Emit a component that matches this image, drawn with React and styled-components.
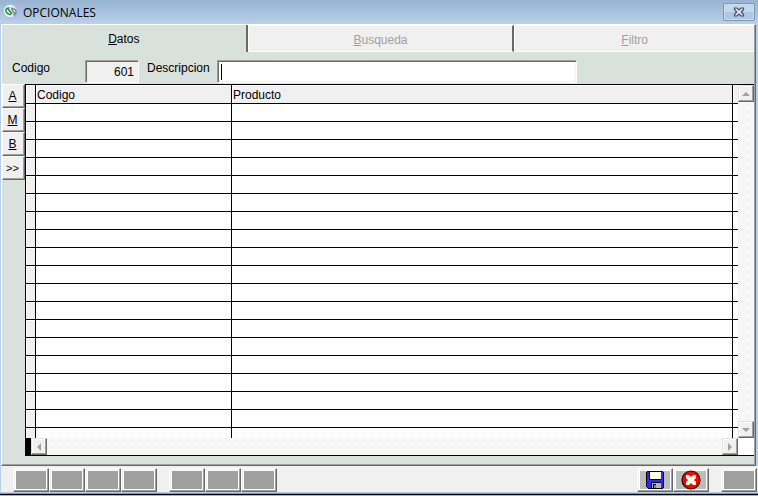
import React from "react";
import styled, { createGlobalStyle } from "styled-components";

const SIDE_ACTIONS = ["A", "M", "B", ">>"];
const ROWS = Array.from({ length: 60 }, (_, i) => i);

const AppIcon = () => (
  <svg width="16" height="16" viewBox="0 0 16 16">
    <circle cx="8" cy="8" r="7.5" fill="#b3bfe6" />
    <circle cx="7" cy="7" r="6.2" fill="#e9eefb" />
    <path d="M6.500 4C4 3.500 2.200 5.500 3 7.500c.8 2 3.200 3.500 5 3" fill="none" stroke="#1f8a3c" strokeWidth="1.500" />
    <path d="M5 5l4 5" fill="none" stroke="#2f8f48" strokeWidth="1.800" />
    <path d="M8 4.500c2-.5 4.500.5 5 2.500.4 2-.5 3.500-2.500 4.500M8.500 5l3 4.500" fill="none" stroke="#7b8c92" strokeWidth="1.500" />
  </svg>
);

const CloseIcon = () => (
  <svg width="12" height="10" viewBox="0 0 12 10">
    <path
      d="M1.500 1h2.500l2 2 2-2h2.500v1.500L8.300 5l2.200 2.500V9H8L6 7 4 9H1.500V7.500L3.700 5 1.500 2.500z"
      fill="#dfe6ee"
      stroke="#46505e"
      strokeWidth="1.200"
    />
  </svg>
);

const DiskIcon = () => (
  <svg width="18" height="18" viewBox="0 0 18 18" shapeRendering="crispEdges">
    <path d="M0 1h1V0h16v1h1v16h-1v1H2v-1H1v-1H0z" fill="#000" />
    <path d="M1 1h16v16H2v-1H1z" fill="#2828ff" />
    <path d="M3 1h12v8H3z" fill="#000" />
    <path d="M4 1h11v7H4z" fill="#ffffe8" />
    <path d="M5 11h10v6H5z" fill="#000" />
    <path d="M6 12h9v5H6z" fill="#b8b8b8" />
    <path d="M7 13h3v4H7z" fill="#000" />
    <path d="M8 14h2v3H8z" fill="#808080" />
  </svg>
);

const CancelIcon = () => (
  <svg width="20" height="20" viewBox="0 0 20 20">
    <circle cx="10" cy="10" r="9" fill="#f00" stroke="#200" strokeWidth="1.200" />
    <path d="M5 7V5h3l2 2 2-2h3v3l-2 2 2 2v3h-3l-2-2-2 2H5v-3l2-2-2-2z" fill="#ffffe8" />
  </svg>
);

const ARROWS = {
  up: "M0 6h8L4 2z",
  down: "M0 2h8L4 6z",
  left: "M6 0v8L2 4z",
  right: "M2 0v8l4-4z",
};

const Arrow = ({ dir }) => (
  <svg width="8" height="8" viewBox="0 0 8 8">
    <path d={ARROWS[dir]} fill="#a0a0a0" />
  </svg>
);

const App = () => (
  <>
    <GlobalStyle />
    <Window>
      <TitleBar>
        <AppIcon />
        <Title>OPCIONALES</Title>
        <CloseButton aria-label="Cerrar">
          <CloseIcon />
        </CloseButton>
      </TitleBar>
      <Page>
        <Tabs role="tablist">
          <Tab role="tab" aria-selected="true">
            <u>D</u>atos
          </Tab>
          <Tab role="tab" aria-selected="false" disabled>
            <u>B</u>usqueda
          </Tab>
          <Tab role="tab" aria-selected="false" disabled>
            <u>F</u>iltro
          </Tab>
        </Tabs>
        <Panel>
          <Fields>
            <CodeLabel htmlFor="codigo">Codigo</CodeLabel>
            <CodeInput id="codigo" defaultValue="601" readOnly />
            <NameLabel htmlFor="descripcion">Descripcion</NameLabel>
            <NameInput id="descripcion" />
          </Fields>
          <Work>
            <Side>
              {SIDE_ACTIONS.map((name) => (
                <SideButton key={name} $plain={name === ">>"}>
                  {name}
                </SideButton>
              ))}
            </Side>
            <Grid>
              <GridMain>
                <TableClip>
                  <Table>
                    <thead>
                      <tr>
                        <Th $w={10} />
                        <Th $w={196}>Codigo</Th>
                        <Th>Producto</Th>
                        <Th $w={5} />
                      </tr>
                    </thead>
                    <tbody>
                      {ROWS.map((i) => (
                        <tr key={i}>
                          <Td $marker />
                          <Td />
                          <Td />
                          <Td />
                        </tr>
                      ))}
                    </tbody>
                  </Table>
                </TableClip>
                <VScroll>
                  <ScrollButton aria-label="Subir">
                    <Arrow dir="up" />
                  </ScrollButton>
                  <ScrollButton aria-label="Bajar">
                    <Arrow dir="down" />
                  </ScrollButton>
                </VScroll>
              </GridMain>
              <GridFoot>
                <Splitter />
                <HScroll>
                  <ScrollButton aria-label="Izquierda">
                    <Arrow dir="left" />
                  </ScrollButton>
                  <ScrollButton aria-label="Derecha">
                    <Arrow dir="right" />
                  </ScrollButton>
                </HScroll>
                <Corner />
              </GridFoot>
            </Grid>
          </Work>
        </Panel>
      </Page>
      <Footer>
        <Group>
          {[1, 2, 3, 4].map((n) => (
            <ToolButton key={n} disabled aria-label={`Accion ${n}`} />
          ))}
        </Group>
        <Group>
          {[5, 6, 7].map((n) => (
            <ToolButton key={n} disabled aria-label={`Accion ${n}`} />
          ))}
        </Group>
        <Group $end>
          <ToolButton aria-label="Guardar">
            <DiskIcon />
          </ToolButton>
          <ToolButton aria-label="Cancelar">
            <CancelIcon />
          </ToolButton>
        </Group>
        <Group>
          <ToolButton disabled aria-label="Salir" />
        </Group>
      </Footer>
      <BottomEdge />
    </Window>
  </>
);

const GlobalStyle = createGlobalStyle`
  * {
    box-sizing: border-box;
  }
  body {
    margin: 0;
    font: 12px/14px "Liberation Sans", Arial, sans-serif;
    color: #000;
  }
  button,
  input {
    margin: 0;
    padding: 0;
    border: 0;
    border-radius: 0;
    outline: 0;
    font: inherit;
    color: inherit;
  }
  svg {
    display: block;
    flex: none;
  }
`;

const Window = styled.div`
  display: flex;
  flex-direction: column;
  height: 100vh;
  background: #b6cfea;
`;

const TitleBar = styled.header`
  display: flex;
  align-items: center;
  height: 24px;
  padding: 0 3px;
  background: linear-gradient(#98b4d1, #b9d1ea);
`;

const Title = styled.h1`
  flex: 1;
  margin: 2px 0 0 4px;
  font: 12px/16px "Open Sans", "Noto Sans", sans-serif;
`;

const CloseButton = styled.button`
  display: flex;
  align-items: center;
  justify-content: center;
  width: 32px;
  height: 18px;
  border: 1px solid #8097b3;
  border-radius: 2px;
  background: linear-gradient(#c3d7ed 50%, #adc7e4 50%);
  box-shadow: inset 0 0 0 1px #c9dcf0;
`;

const Page = styled.main`
  display: flex;
  flex: 1;
  flex-direction: column;
  min-height: 0;
  margin: 0 2px 0 1px;
  border: 1px solid;
  border-color: #fff #696969 #696969 #fff;
  box-shadow: inset -1px -1px #a0a0a0;
  padding: 0 1px 1px 0;
  background: #d8e1dc;
`;

const Tabs = styled.div`
  display: grid;
  grid-template: 27px / 246fr 267fr 240fr;
`;

const Tab = styled.button`
  border-right: 2px solid #696969;
  background: #d8e1dc;

  &:disabled {
    padding-top: 3px;
    border-top: 1px solid #fff;
    border-left: 1px solid #fff;
    border-bottom: 1px solid #fff;
    background: #f0f0f0;
    color: #a0a0a0;
  }
  &:last-child {
    border-right: 0;
  }
`;

const Panel = styled.section`
  display: flex;
  flex: 1;
  flex-direction: column;
  min-height: 0;
  padding-bottom: 8px;
`;

const Fields = styled.div`
  display: flex;
  align-items: flex-start;
  height: 32px;
  padding: 8px 0 0 10px;
`;

const CodeLabel = styled.label`
  width: 73px;
  padding-top: 1px;
`;

const NameLabel = styled(CodeLabel)`
  width: 70px;
`;

const Input = styled.input`
  height: 23px;
  border: 1px solid #fff;
  border-top-color: #a0a0a0;
  border-left-color: #a0a0a0;
  box-shadow: inset 1px 1px #696969, inset -1px -1px #f0f0f0;
`;

const CodeInput = styled(Input)`
  width: 54px;
  margin-right: 8px;
  padding: 1px 4px 0 0;
  background: #f0f0f0;
  text-align: right;
`;

const NameInput = styled(Input)`
  flex: 0 1 360px;
  min-width: 0;
  padding-left: 3px;
  background: linear-gradient(#000, #000) 3px 3px / 1px 16px no-repeat #fff;
  caret-color: transparent;
`;

const Work = styled.div`
  display: flex;
  flex: 1;
  min-height: 0;
`;

const Side = styled.nav`
  display: flex;
  flex: none;
  flex-direction: column;
  width: 23px;
`;

const SideButton = styled.button`
  height: 24px;
  padding-right: 2px;
  border: 1px solid #fff;
  border-right-color: #696969;
  border-bottom-color: #696969;
  box-shadow: inset -1px -1px #a0a0a0;
  background: #f0f0f0;
  font-size: ${(p) => (p.$plain ? "11px" : "12px")};
  text-decoration: ${(p) => (p.$plain ? "none" : "underline")};
`;

const Grid = styled.div`
  display: flex;
  flex: 1;
  flex-direction: column;
  min-width: 0;
  border: 1px solid #000;
  border-right: 0;
  background: #fff;
`;

const GridMain = styled.div`
  display: flex;
  flex: 1;
  min-height: 0;
`;

const TableClip = styled.div`
  flex: 1;
  overflow: hidden;
`;

const Table = styled.table`
  width: 100%;
  border-spacing: 0;
  table-layout: fixed;
`;

const Th = styled.th`
  width: ${(p) => (p.$w ? `${p.$w}px` : "auto")};
  height: 19px;
  padding: 2px 1px 0;
  border-right: 1px solid #000;
  border-bottom: 1px solid #000;
  background: #f0f0f0;
  box-shadow: inset 1px 1px #fff;
  font-weight: normal;
  text-align: left;

  &:last-child {
    border-right: 0;
  }
`;

const Td = styled.td`
  height: 18px;
  padding: 0;
  border-right: 1px solid #000;
  border-bottom: 1px solid #000;
  background: ${(p) => (p.$marker ? "#f0f0f0" : "#fff")};
  box-shadow: ${(p) => (p.$marker ? "inset 1px 1px #fff" : "none")};

  &:last-child {
    border-right: 0;
  }
`;

const VScroll = styled.div`
  display: flex;
  flex: none;
  flex-direction: column;
  justify-content: space-between;
  width: 16px;
  background: repeating-conic-gradient(#f0f0f0 0 25%, #fff 0 50%) 0 0 / 2px 2px;
`;

const HScroll = styled(VScroll)`
  flex: 1;
  flex-direction: row;
  width: auto;
`;

const ScrollButton = styled.button`
  display: flex;
  align-items: center;
  justify-content: center;
  width: 16px;
  height: 17px;
  border: 1px solid #e3e3e3;
  border-right-color: #696969;
  border-bottom-color: #696969;
  box-shadow: inset -1px -1px #a0a0a0, inset 1px 1px #fff;
  background: #f0f0f0;
`;

const GridFoot = styled.div`
  display: flex;
  height: 17px;
`;

const Splitter = styled.div`
  width: 5px;
  background: #000;
`;

const Corner = styled.div`
  width: 16px;
  background: #fff;
`;

const Footer = styled.footer`
  display: flex;
  gap: 12px;
  height: 26px;
  margin-left: 1px;
  padding: 2px 1px 0 12px;
  background: #f0f0f0;
`;

const Group = styled.div`
  display: flex;
  margin-left: ${(p) => (p.$end ? "auto" : "0")};
`;

const ToolButton = styled.button`
  display: flex;
  align-items: center;
  justify-content: center;
  width: 36px;
  height: 24px;
  border: 1px solid #fff;
  border-right-color: #696969;
  border-bottom-color: #696969;
  background: #b9beb9;
  box-shadow: inset -1px -1px #a0a0a0, inset 0 0 0 1px #f0f0f0,
    inset 0 0 0 2px #fff;

  &:disabled {
    background: #a0a0a0;
  }
`;

const BottomEdge = styled.div`
  height: 4px;
  border-bottom: 1px solid #a9b3b5;
  background: linear-gradient(#b6cfea 1px, #35b7dc 1px 2px, #000 2px);
`;

export default App;
